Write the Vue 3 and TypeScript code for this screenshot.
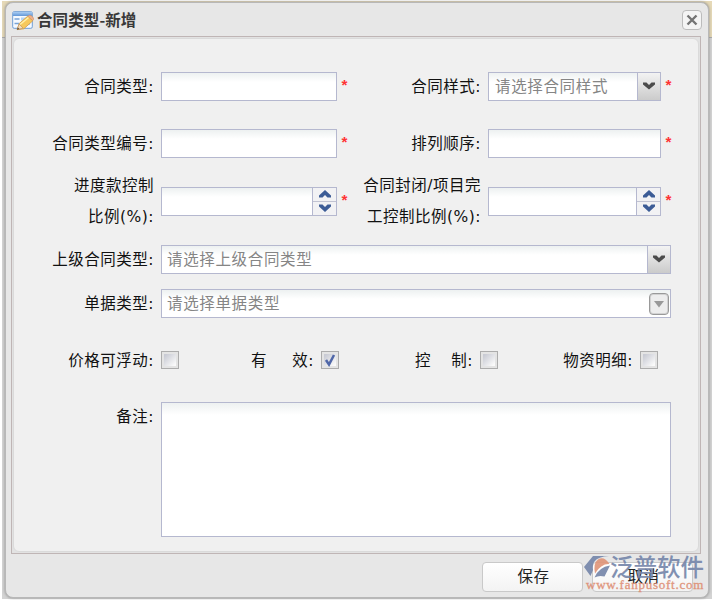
<script setup lang="ts">
import { ref } from 'vue'

interface CheckItem {
  label: string
  cls: string
  split?: [string, string]
  checked: boolean
}

const title = '合同类型-新增'
const checks = ref<CheckItem[]>([
  { label: '价格可浮动', cls: 'c1', checked: false },
  { label: '有效', cls: 'c2', split: ['有', '效'], checked: true },
  { label: '控制', cls: 'c3', split: ['控', '制'], checked: false },
  { label: '物资明细', cls: 'c4', checked: false },
])
const toggle = (c: CheckItem) => {
  c.checked = !c.checked
}
</script>

<template>
  <div class="page">
    <div class="window">
      <header class="header">
        <svg class="form-icon" width="22" height="20" viewBox="0 0 22 20">
          <defs>
            <linearGradient id="bar" x1="0" y1="0" x2="0" y2="1">
              <stop offset="0" stop-color="#a9cdf3" />
              <stop offset="1" stop-color="#6196d6" />
            </linearGradient>
          </defs>
          <rect x=".7" y=".7" width="19.6" height="16.6" rx="1.5" fill="#f5faff" stroke="#6e9dd4" />
          <rect x="1" y="1" width="19" height="4" fill="url(#bar)" />
          <path d="M2.5 8h5M2.5 12.5h5" stroke="#79a4d8" stroke-width="1.6" />
          <path d="M9 8h9M9 12.5h9" stroke="#b5d4f3" stroke-width="3" />
          <path d="M5.2 18.6l2-6 8.6-7.500 5 4.700-9 8z" fill="#f7c85b" stroke="#d09a45" stroke-width=".8" />
          <path d="M8 13.5l8.6-7" stroke="#fff0a8" stroke-width="1.5" />
          <path d="M15.8 5.2l1.3-.9q2.5-.6 4.400 2.800l.1 1.600-1 .9z" fill="#efb08a" stroke="#cd9068" stroke-width=".6" />
          <path d="M5.2 18.6l1.9-5.6 4 4.2z" fill="#f4dec0" stroke="#b98b54" stroke-width=".6" />
          <path d="M5 18.8l.8-2.4 1.7 1.5z" fill="#5a4733" />
        </svg>
        <h1 class="title">{{ title }}</h1>
        <button class="close" type="button" aria-label="关闭">
          <svg width="18" height="18" viewBox="0 0 18 18">
            <path d="M4.500 4.500l9 9M13.500 4.500l-9 9" stroke="#747474" stroke-width="2.4" />
          </svg>
        </button>
      </header>

      <main class="panel">
        <form class="form" @submit.prevent>
          <div class="row row-1">
            <label class="label">合同类型:</label>
            <div class="field left"><input class="input" /></div>
            <span class="star">*</span>
            <label class="label second">合同样式:</label>
            <div class="field right">
              <input class="input inset" placeholder="请选择合同样式" />
              <span class="trigger">
                <svg width="12" height="8" viewBox="0 0 12 8"><path d="M0 .5h3.500L6 3 8.500.5H12V2.500L6 7.500 0 2.500z" fill="#4b4b4b" /></svg>
              </span>
            </div>
            <span class="star">*</span>
          </div>

          <div class="row row-2">
            <label class="label">合同类型编号:</label>
            <div class="field left"><input class="input" /></div>
            <span class="star">*</span>
            <label class="label second">排列顺序:</label>
            <div class="field right"><input class="input" /></div>
            <span class="star">*</span>
          </div>

          <div class="row row-3">
            <label class="label">进度款控制<br />比例(%):</label>
            <div class="field left">
              <input class="input" />
              <span class="spinner">
                <i><svg width="12" height="8" viewBox="0 0 12 8"><path d="M0 7.500V5.500L6 0l6 5.500v2H8.500L6 5 3.500 7.500z" fill="#3c5c96" /></svg></i>
                <i><svg width="12" height="8" viewBox="0 0 12 8"><path d="M0 .5V2.500L6 8l6-5.500v-2H8.500L6 3 3.500.5z" fill="#3c5c96" /></svg></i>
              </span>
            </div>
            <span class="star">*</span>
            <label class="label second">合同封闭/项目完<br />工控制比例(%):</label>
            <div class="field right">
              <input class="input" />
              <span class="spinner">
                <i><svg width="12" height="8" viewBox="0 0 12 8"><path d="M0 7.500V5.500L6 0l6 5.500v2H8.500L6 5 3.500 7.500z" fill="#3c5c96" /></svg></i>
                <i><svg width="12" height="8" viewBox="0 0 12 8"><path d="M0 .5V2.500L6 8l6-5.500v-2H8.500L6 3 3.500.5z" fill="#3c5c96" /></svg></i>
              </span>
            </div>
            <span class="star">*</span>
          </div>

          <div class="row row-4">
            <label class="label">上级合同类型:</label>
            <div class="field wide">
              <input class="input" placeholder="请选择上级合同类型" />
              <span class="trigger">
                <svg width="12" height="8" viewBox="0 0 12 8"><path d="M0 .5h3.500L6 3 8.500.5H12V2.500L6 7.500 0 2.500z" fill="#4b4b4b" /></svg>
              </span>
            </div>
          </div>

          <div class="row row-5">
            <label class="label">单据类型:</label>
            <div class="field wide">
              <input class="input" placeholder="请选择单据类型" />
              <span class="picker">
                <svg width="10" height="7" viewBox="0 0 10 7"><path d="M0 0h10L5 6.500z" fill="#999" /></svg>
              </span>
            </div>
          </div>

          <div class="checks">
            <div v-for="c in checks" :key="c.label" class="check" :class="c.cls" @click="toggle(c)">
              <span v-if="c.split" class="check-label spread"><span>{{ c.split[0] }}</span><span>{{ c.split[1] }}:</span></span>
              <span v-else class="check-label">{{ c.label }}:</span>
              <span class="box">
                <svg v-if="c.checked" width="12" height="14" viewBox="0 0 12 14"><path d="M2 7l3 4.500L10 2" fill="none" stroke="#5067a8" stroke-width="2.500" /></svg>
              </span>
            </div>
          </div>

          <div class="row row-remark">
            <label class="label">备注:</label>
            <textarea class="remark"></textarea>
          </div>
        </form>
      </main>

      <footer class="footer">
        <button class="btn" type="button">保存</button>
        <button class="btn" type="button">取消</button>
      </footer>
    </div>

    <div class="watermark">
      <div class="brand">
        <svg width="26" height="24" viewBox="0 0 26 24">
          <path d="M9 1h16q-11 .5-14.500 5.500Q8 10 9 15L6.500 21 0 12z" fill="#7485a9" />
          <path d="M11 18.500Q9 8 14 4.500q6-4 11.500 4.500Q17 8.500 11 18.500z" fill="#e09478" />
          <path d="M10.500 22.500Q15 12 26 10.500L20.500 21.500Q15 20 10.500 22.500z" fill="#7485a9" />
        </svg>
        <span>泛普软件</span>
      </div>
      <div class="site">www.fanpusoft.com</div>
    </div>
  </div>
</template>

<style>
body {
  margin: 0;
  background: #fff;
}
</style>

<style scoped>
* {
  box-sizing: border-box;
}
.page {
  position: relative;
  width: 714px;
  height: 600px;
  padding: 1px 2px;
  overflow: hidden;
  font-family: 'Noto Sans CJK SC', sans-serif;
  font-size: 15.5px;
  letter-spacing: 0.5px;
  color: #111;
  background: linear-gradient(#e6d9b7 0 36px, #a9a9a9 36px 37px, #d3d3d3 37px) 2px 1px / 710px 598px no-repeat #fff;
}
.window {
  width: 704px;
  height: 596px;
  margin: 1px 0 0 3px;
  border: 1px solid #b8b8b8;
  border-radius: 8px;
  background: #e7e7e7;
  box-shadow: 0 0 3px #8a8a8a;
}
.header {
  display: flex;
  align-items: center;
  height: 33px;
  padding: 0 6px 0 6px;
}
.form-icon {
  margin-top: 3px;
}
.title {
  flex: 1;
  margin: 0 0 2px 3px;
  font-size: 15.5px;
  line-height: 22px;
  font-weight: 700;
  letter-spacing: 0.1px;
  color: #383838;
}
.close {
  display: flex;
  width: 20px;
  height: 20px;
  margin-top: 1px;
  padding: 0;
  border: 1px solid #bcbcbc;
  border-radius: 4px;
  background: #f4f4f4;
}
.panel {
  width: 690px;
  height: 518px;
  margin-left: 5px;
  padding: 1px;
  border: 1px solid #bfb5b5;
  background: #e2e2e2;
}
.form {
  height: 514px;
  padding-top: 33px;
  border: 1px solid #dadada;
  border-radius: 6px;
  background: #f0f0f0;
}
.row {
  display: flex;
  align-items: center;
  height: 29px;
}
.row-2 {
  margin-top: 28px;
}
.row-3 {
  height: 62px;
  margin-top: 12px;
}
.row-4 {
  margin-top: 13px;
}
.row-5 {
  margin-top: 15px;
}
.label {
  width: 140px;
  margin-right: 7px;
  padding-top: 2px;
  flex: none;
  text-align: right;
  line-height: 31px;
  white-space: nowrap;
}
.label,
.check-label {
  font-family: 'DejaVu Sans', 'Noto Sans CJK SC', sans-serif;
}
.label.second {
  width: 129px;
}
.field {
  display: flex;
  flex: none;
  height: 29px;
  border: 1px solid #b5b8cf;
  background: linear-gradient(#edf1f1, #fff 9px);
}
.left {
  width: 176px;
}
.right {
  width: 173px;
}
.wide {
  width: 510px;
}
.input {
  flex: 1;
  min-width: 0;
  padding: 0 0 4px 5px;
  border: 0;
  outline: 0;
  background: transparent;
  font: inherit;
  letter-spacing: 0.65px;
}
.input.inset {
  padding-left: 6px;
}
.input::placeholder {
  color: #858585;
  opacity: 1;
}
.star {
  width: 12px;
  margin-left: 3px;
  padding-top: 3px;
  font-family: 'Liberation Mono', monospace;
  font-size: 15px;
  font-weight: 700;
  line-height: 20px;
  letter-spacing: 0;
  color: #f33;
}
.trigger {
  display: flex;
  align-items: center;
  justify-content: center;
  width: 23px;
  padding-bottom: 2px;
  border-left: 1px solid #b5b8cf;
  background: linear-gradient(#f3f3f3, #cbcbcb);
}
.spinner {
  display: flex;
  flex-direction: column;
  width: 24px;
  border-left: 1px solid #b5b8cf;
  background: #f2f2f4;
}
.spinner i {
  display: flex;
  flex: 1;
  align-items: center;
  justify-content: center;
}
.spinner i + i {
  border-top: 1px solid #c1c3d2;
}
.picker {
  display: flex;
  align-items: center;
  justify-content: center;
  width: 20px;
  height: 22px;
  margin: 3px 1px 0 0;
  border: 1px solid #999;
  border-radius: 4px;
  background: #ededed;
  box-shadow: inset 0 0 0 1px #d2d2d2;
}
.checks {
  display: flex;
  height: 18px;
  margin-top: 33px;
}
.check {
  display: flex;
  align-items: center;
  justify-content: flex-end;
  gap: 7px;
}
.c1 {
  width: 165px;
}
.c2 {
  width: 160px;
}
.c3 {
  width: 159px;
}
.c4 {
  width: 160px;
}
.check-label {
  padding-top: 1px;
  line-height: 20px;
  white-space: nowrap;
}
.spread {
  display: flex;
  justify-content: space-between;
  width: 63px;
}
.c3 .spread {
  width: 58px;
}
.box {
  display: flex;
  align-items: center;
  justify-content: center;
  width: 18px;
  height: 18px;
  border: 1px solid #acacac;
  background: linear-gradient(135deg, #c9cbd4 20%, #fafafa 80%);
  box-shadow: inset 0 0 0 2px #e4e4e4;
}
.row-remark {
  height: 135px;
  margin-top: 33px;
  align-items: flex-start;
}
.row-remark .label {
  line-height: 26px;
}
.remark {
  width: 510px;
  height: 135px;
  border: 1px solid #b5b8cf;
  outline: 0;
  resize: none;
  background: linear-gradient(#edf1f1, #fff 12px);
}
.footer {
  display: flex;
  justify-content: flex-end;
  gap: 9px;
  padding: 8px 15px 0 0;
}
.btn {
  width: 101px;
  height: 30px;
  padding: 0 0 4px 2px;
  border: 1px solid #c9c9c9;
  border-radius: 4px;
  background: linear-gradient(#fff, #f3f3f3);
  font: inherit;
  letter-spacing: 0.5px;
  color: #222;
}
.watermark {
  position: absolute;
  left: 584px;
  top: 555px;
  width: 125px;
  opacity: 0.9;
  pointer-events: none;
}
.brand {
  display: flex;
  height: 23px;
  color: #7485a9;
  font-size: 23.5px;
  font-weight: 500;
  line-height: 22px;
  letter-spacing: 0;
  white-space: nowrap;
}
.brand svg {
  flex: none;
}
.site {
  margin-left: 2px;
  color: #de8c70;
  font-family: 'Liberation Serif', serif;
  font-size: 13px;
  line-height: 13px;
  letter-spacing: 0.75px;
  -webkit-text-stroke: 0.3px #de8c70;
}
</style>
